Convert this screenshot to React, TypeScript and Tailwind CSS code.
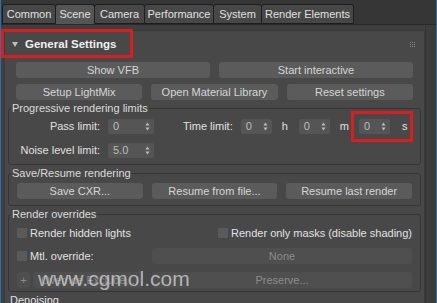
import React from 'react';

const font = { fontFamily: '"Liberation Sans", Arial, sans-serif' };

const tabs = [
    { label: 'Common', w: 'w-[54px]' },
    { label: 'Scene', w: 'w-[40px]', active: true },
    { label: 'Camera', w: 'w-[51px]' },
    { label: 'Performance', w: 'w-[70px]' },
    { label: 'System', w: 'w-[49px]' },
    { label: 'Render Elements', w: 'w-[93px]' },
];

function Btn({ children, className = '', disabled = false }: { children: React.ReactNode; className?: string; disabled?: boolean }) {
    return (
        <div
            className={`h-[16px] rounded-[3px] flex items-center justify-center text-[11px] leading-none whitespace-nowrap ${disabled ? 'bg-[#4f4f4f] text-[#8c8c8c]' : 'bg-[#5b5b5b] text-[#d6d6d6]'
                } ${className}`}
        >
            {children}
        </div>
    );
}

function Spinner({ value, w }: { value: string; w: string }) {
    return (
        <div className={`${w} h-[15px] bg-[#555555] rounded-[2px] flex items-center justify-between pl-[5px] pr-[4px]`}>
            <span className="text-[11px] text-[#bdbdbd] leading-none">{value}</span>
            <svg width="5" height="9" viewBox="0 0 5 9">
                <path d="M2.5 0.5 L4.5 3.5 L0.5 3.5 Z" fill="#bdbdbd" />
                <path d="M2.5 8.5 L4.5 5.5 L0.5 5.5 Z" fill="#bdbdbd" />
            </svg>
        </div>
    );
}

function Group({ title, children, className = '' }: { title: string; children: React.ReactNode; className?: string }) {
    return (
        <fieldset className={`border border-[#353535] rounded-[3px] mx-[3px] ${className}`}>
            <legend className="text-[11px] text-[#dcdcdc] leading-none px-[1px] ml-[2px]">{title}</legend>
            {children}
        </fieldset>
    );
}

function Check({ label }: { label: string }) {
    return (
        <div className="flex items-center gap-[3px] whitespace-nowrap">
            <div className="w-[10px] h-[10px] bg-[#5a5a5a] rounded-[1px]" />
            <span className="text-[11px] text-[#e2e2e2] leading-none">{label}</span>
        </div>
    );
}

export default function App() {
    return (
        <div className="w-[437px] h-[303px] overflow-hidden bg-[#3f3f3f] flex relative" style={font}>
            <div className="w-[2px] bg-[#2d6fb0]" />
            <div className="flex-1 flex flex-col">
                {/* tabs */}
                <div className="h-[25px] pt-[5px] pl-[1px] flex items-end border-b border-[#2a2a2a] bg-[#363636]">
                    {tabs.map((t) => (
                        <div
                            key={t.label}
                            className={`${t.w} h-[20px] flex items-center justify-center text-[11px] text-[#e0e0e0] border border-[#1e1e1e] rounded-t-[3px] -mr-px ${t.active ? 'bg-[#555555] border-b-0' : 'bg-[#474747]'
                                }`}
                        >
                            {t.label}
                        </div>
                    ))}
                </div>
                <div className="flex-1 flex">
                    <div className="flex-1 pl-[3px] pt-[5px]">
                        <div className="h-full bg-[#484848] border border-[#3a3a3a] rounded-[2px]">
                            {/* rollout header */}
                            <div className="h-[27px] flex items-center pl-[7px] pr-[9px] relative">
                                <svg width="6" height="5" viewBox="0 0 6 5" className="mr-[7px]">
                                    <path d="M0 0 L6 0 L3 5 Z" fill="#bdbdbd" />
                                </svg>
                                <span className="text-[11.5px] font-bold text-[#f0f0f0] leading-none">General Settings</span>
                                <div className="ml-auto grid grid-cols-3 gap-[1px]">
                                    {Array.from({ length: 9 }).map((_, i) => (
                                        <div key={i} className="w-[1px] h-[1px] bg-[#8a8a8a]" />
                                    ))}
                                </div>
                                <div className="absolute left-[-4px] top-[-2px] w-[132px] h-[29px] border-[3px] border-[#d81e1e]" />
                            </div>
                            <div className="px-[11px] pt-[4px] flex flex-col gap-[6px]">
                                <div className="flex gap-[9px]">
                                    <Btn className="flex-1">Show VFB</Btn>
                                    <Btn className="flex-1">Start interactive</Btn>
                                </div>
                                <div className="flex gap-[9px]">
                                    <Btn className="flex-1">Setup LightMix</Btn>
                                    <Btn className="flex-1">Open Material Library</Btn>
                                    <Btn className="flex-1">Reset settings</Btn>
                                </div>
                            </div>
                            <div className="mt-[3px] flex flex-col gap-[3px]">
                                <Group title="Progressive rendering limits" className="h-[62px]">
                                    <div className="flex items-center h-[24px] relative">
                                        <span className="w-[91px] text-right text-[11px] text-[#e0e0e0]">Pass limit:</span>
                                        <div className="ml-[8px]"><Spinner value="0" w="w-[46px]" /></div>
                                        <span className="ml-[29px] text-[11px] text-[#e0e0e0]">Time limit:</span>
                                        <div className="ml-[8px]"><Spinner value="0" w="w-[31px]" /></div>
                                        <span className="ml-[10px] text-[11px] text-[#e0e0e0]">h</span>
                                        <div className="ml-[11px]"><Spinner value="0" w="w-[31px]" /></div>
                                        <span className="ml-[10px] text-[11px] text-[#e0e0e0]">m</span>
                                        <div className="ml-[10px] relative">
                                            <Spinner value="0" w="w-[31px]" />
                                            <div className="absolute left-[-8px] top-[-8px] w-[62px] h-[31px] border-[3px] border-[#d81e1e]" />
                                        </div>
                                        <span className="ml-[12px] text-[11px] text-[#e0e0e0]">s</span>
                                    </div>
                                    <div className="flex items-center h-[24px]">
                                        <span className="w-[91px] text-right text-[11px] text-[#e0e0e0]">Noise level limit:</span>
                                        <div className="ml-[8px]"><Spinner value="5.0" w="w-[46px]" /></div>
                                    </div>
                                </Group>
                                <Group title="Save/Resume rendering" className="h-[38px]">
                                    <div className="flex gap-[9px] px-[8px] pt-[4px]">
                                        <Btn className="flex-1">Save CXR...</Btn>
                                        <Btn className="flex-1">Resume from file...</Btn>
                                        <Btn className="flex-1">Resume last render</Btn>
                                    </div>
                                </Group>
                                <Group title="Render overrides" className="h-[83px]">
                                    <div className="px-[8px] pt-[7px] flex flex-col">
                                        <div className="flex h-[12px] items-center">
                                            <div className="w-[201px]"><Check label="Render hidden lights" /></div>
                                            <Check label="Render only masks (disable shading)" />
                                        </div>
                                        <div className="flex h-[16px] items-center mt-[9px] gap-[9px]">
                                            <div className="w-[126px]"><Check label="Mtl. override:" /></div>
                                            <Btn disabled className="flex-1">None</Btn>
                                        </div>
                                        <div className="flex h-[16px] items-center mt-[8px] gap-[9px]">
                                            <div className="w-[126px] flex gap-[3px]">
                                                <Btn disabled className="w-[13px]">+</Btn>
                                                <Btn disabled className="flex-1">Override Exclude...</Btn>
                                            </div>
                                            <Btn disabled className="flex-1">Preserve...</Btn>
                                        </div>
                                    </div>
                                </Group>
                                <div className="pl-[5px] text-[11px] text-[#e0e0e0] leading-none">Denoising</div>
                            </div>
                        </div>
                    </div>
                    <div className="w-[11px] bg-[#3c3c3c] border-l border-[#353535]" />
                </div>
            </div>
            <div className="w-[2px] bg-[#2d6fb0]" />
            <div className="absolute left-[38px] top-[268px] text-[21px] leading-none text-[#d0d0d0]/80 pointer-events-none">
                www.cgmol.com
            </div>
        </div>
    );
}
